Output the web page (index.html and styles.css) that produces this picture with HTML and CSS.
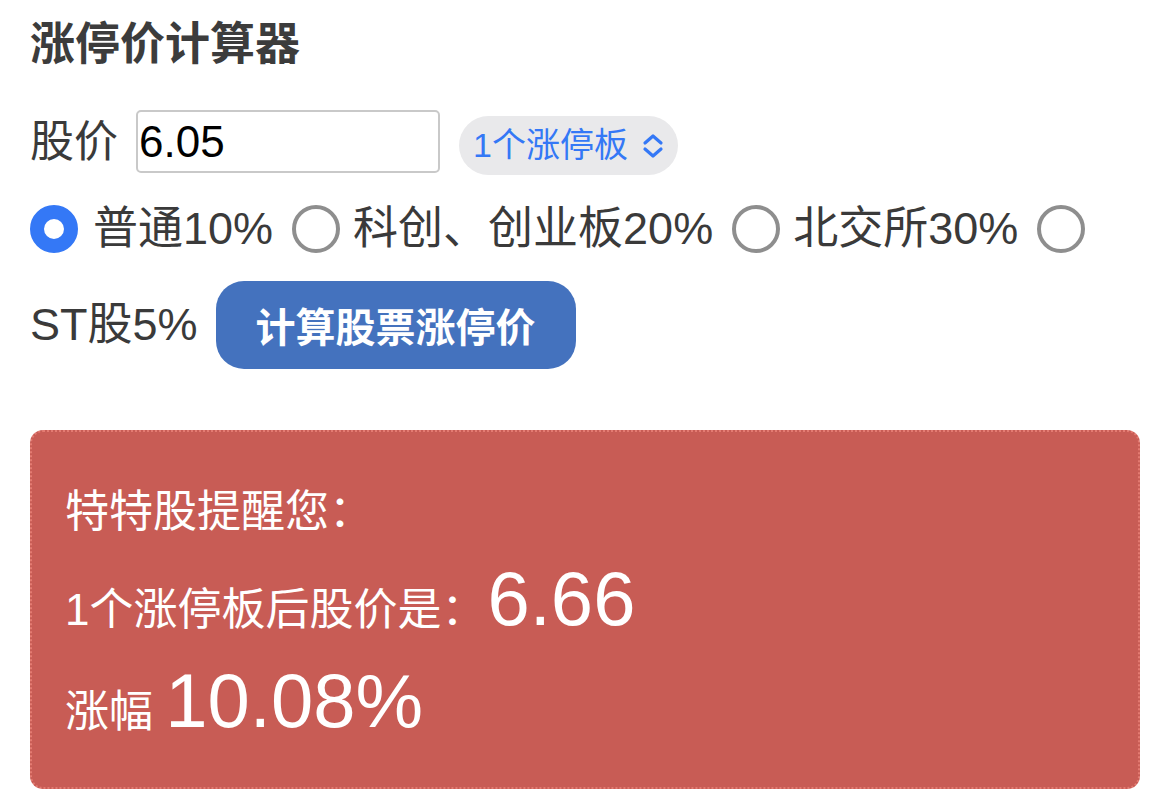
FILE: index.html
```html
<!DOCTYPE html>
<html lang="zh-CN">
<head>
<meta charset="utf-8">
<title>涨停价计算器</title>
<link rel="stylesheet" href="styles.css">
</head>
<body>
<div class="page">
  <h1 class="title">涨停价计算器</h1>
  <div class="price-row">
    <span class="label">股价</span>
    <div class="input">6.05</div>
    <div class="select">
      <span class="select-text">1个涨停板</span>
      <svg class="chevron" width="22" height="26" viewBox="0 0 22 26"><path d="M3 10 L11 3 L19 10 M3 16 L11 23 L19 16" fill="none" stroke="#3478f6" stroke-width="3.2" stroke-linecap="round" stroke-linejoin="round"/></svg>
    </div>
  </div>
  <div class="radio-row">
    <span class="radio checked"></span><span class="opt">普通10%</span>
    <span class="radio"></span><span class="opt">科创、创业板20%</span>
    <span class="radio"></span><span class="opt">北交所30%</span>
    <span class="radio"></span>
  </div>
  <div class="action-row">
    <span class="opt">ST股5%</span>
    <button class="calc">计算股票涨停价</button>
  </div>
  <div class="result">
    <div class="line l1">特特股提醒您：</div>
    <div class="line l2">1个涨停板后股价是：<span class="big">6.66</span></div>
    <div class="line l3">涨幅 <span class="big">10.08%</span></div>
  </div>
</div>
</body>
</html>
```

FILE: styles.css
```css
html, body {
  margin: 0;
  padding: 0;
  background: #ffffff;
}
body {
  font-family: "Liberation Sans", "Noto Sans CJK SC", sans-serif;
  color: #3a3a3a;
}
.page {
  padding: 0 30px;
}
.title {
  margin: 13px 0 0;
  font-size: 45px;
  line-height: 63px;
  font-weight: bold;
  color: #3c3c3c;
}
.price-row {
  margin-top: 34px;
  display: flex;
  align-items: flex-start;
  height: 63px;
}
.label {
  font-size: 44px;
  line-height: 63px;
  margin-right: 18px;
}
.input {
  box-sizing: border-box;
  width: 304px;
  height: 63px;
  border: 2px solid #c9c9c9;
  border-radius: 5px;
  font-size: 44px;
  line-height: 59px;
  padding-left: 1px;
  color: #000;
}
.select {
  margin-left: 19px;
  margin-top: 6px;
  height: 59px;
  border-radius: 30px;
  background: #e9e9eb;
  display: flex;
  align-items: center;
  padding: 0 14px 0 14px;
  color: #3478f6;
}
.select-text {
  font-size: 34px;
  line-height: 59px;
}
.chevron {
  display: block;
  margin-left: 14px;
}
.radio-row {
  margin-top: 28px;
  display: flex;
  align-items: center;
  height: 56px;
}
.radio {
  box-sizing: border-box;
  width: 48px;
  height: 48px;
  border-radius: 50%;
  border: 4px solid #8e8e8e;
  background: #fff;
  flex: none;
  margin-right: 13px;
}
.radio.checked {
  border: 14px solid #3478f6;
  margin-right: 15px;
}
.opt {
  font-size: 45px;
  line-height: 56px;
  margin-right: 19px;
  white-space: nowrap;
}
.action-row {
  margin-top: 24px;
  display: flex;
  align-items: center;
  height: 88px;
}
.action-row .opt {
  margin-right: 18px;
}
.calc {
  height: 88px;
  padding: 0 40px;
  border: none;
  border-radius: 28px;
  background: #4472be;
  color: #fff;
  font-family: "Liberation Sans", "Noto Sans CJK SC", sans-serif;
  font-size: 40px;
  font-weight: bold;
}
.result {
  margin-top: 61px;
  box-sizing: border-box;
  height: 359px;
  border: 2px dotted #e37b72;
  border-radius: 13px;
  background: #c85c55;
  color: #fff;
  padding: 30px 33px 0;
}
.line {
  font-size: 44px;
  line-height: 100px;
  height: 100px;
}
.l2 {
  margin-top: -2px;
}
.l3 {
  margin-top: 2px;
}
.big {
  font-size: 76px;
  line-height: 1;
}
.l2 .big {
  margin-left: 2px;
}
```
